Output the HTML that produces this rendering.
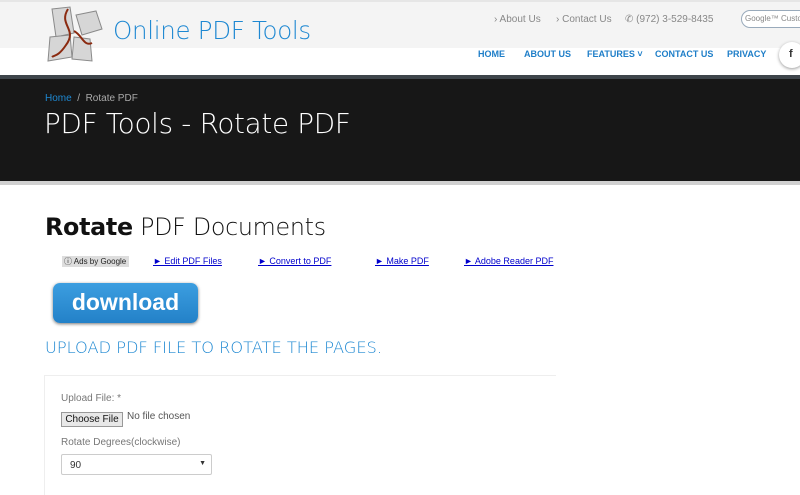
<!DOCTYPE html>
<html><head><meta charset="utf-8"><style>
*{margin:0;padding:0;box-sizing:border-box}
body{width:800px;height:487px;overflow:hidden;background:#fff;font-family:"Liberation Sans",sans-serif;position:relative}
.a{position:absolute;white-space:nowrap}
</style></head><body>
<div class="a" style="left:0;top:0;width:800px;height:2px;background:#e6e6e6"></div>
<div class="a" style="left:0;top:2px;width:800px;height:46px;background:#f4f4f4"></div>
<svg class="a" style="left:44px;top:5px" width="62" height="58" viewBox="0 0 62 58">
<g fill="#d6d6d6" stroke="#8a8a8a" stroke-width="1">
<path d="M8 4 L26 2 L30 28 L12 32 Z"/>
<path d="M32 10 L52 6 L58 24 L38 30 Z"/>
<path d="M6 32 L26 30 L28 52 L4 56 Z"/>
<path d="M30 32 L46 34 L48 56 L28 54 Z"/>
</g>
<path d="M24 4 C14 20,34 24,22 40 C14 52,10 50,8 52 M30 26 C38 30,40 42,48 38" stroke="#8b2a10" stroke-width="2" fill="none"/>
</svg>
<div class="a" style="left:113px;top:16px;font-size:24.5px;color:#1e88d2;font-family:'DejaVu Sans',sans-serif;font-weight:200;letter-spacing:-0.3px">Online PDF Tools</div>
<div class="a" style="left:494px;top:14px;font-size:10px;color:#888">› About Us</div>
<div class="a" style="left:556px;top:14px;font-size:10px;color:#888">› Contact Us</div>
<div class="a" style="left:625px;top:14px;font-size:10px;color:#888">✆ (972) 3-529-8435</div>
<div class="a" style="left:741px;top:10px;width:70px;height:18px;border:1px solid #9ab;border-radius:9px;background:#fff;font-size:8px;color:#888;padding:3px 0 0 3px">Google™ Custom</div>
<div class="a" style="left:478px;top:49px;font-size:9px;font-weight:bold;color:#1e7ec8">HOME</div>
<div class="a" style="left:524px;top:49px;font-size:9px;font-weight:bold;color:#1e7ec8">ABOUT US</div>
<div class="a" style="left:587px;top:49px;font-size:9px;font-weight:bold;color:#1e7ec8">FEATURES ˅</div>
<div class="a" style="left:655px;top:49px;font-size:9px;font-weight:bold;color:#1e7ec8">CONTACT US</div>
<div class="a" style="left:727px;top:49px;font-size:9px;font-weight:bold;color:#1e7ec8">PRIVACY</div>
<div class="a" style="left:779px;top:42px;width:26px;height:26px;border-radius:50%;background:#fff;box-shadow:0 1px 3px #999;font-size:11px;font-weight:bold;color:#333;padding:6px 0 0 10px">f</div>
<div class="a" style="left:0;top:75px;width:800px;height:4px;background:#3e454b"></div>
<div class="a" style="left:0;top:79px;width:800px;height:102px;background:#171717"></div>
<div class="a" style="left:0;top:181px;width:800px;height:4px;background:#d0d0d0"></div>
<div class="a" style="left:45px;top:93px;font-size:10px;color:#1e88d2">Home <span style="color:#aaa">&nbsp;/&nbsp; Rotate PDF</span></div>
<div class="a" style="left:44px;top:107px;font-size:27.8px;color:#fff;font-family:'DejaVu Sans',sans-serif;font-weight:200;letter-spacing:-0.3px">PDF Tools - Rotate PDF</div>
<div class="a" style="left:45px;top:213px;font-size:23.8px;color:#111;font-family:'DejaVu Sans',sans-serif;letter-spacing:-0.3px"><b>Rotate</b> <span style="font-weight:200">PDF Documents</span></div>
<div class="a" style="left:62px;top:256px;width:67px;height:11px;background:#ddd;font-size:8px;color:#222;padding-left:2px">ⓘ Ads by Google</div>
<div class="a" style="left:153px;top:256px;font-size:9px;color:#00c;text-decoration:underline">► Edit PDF Files</div>
<div class="a" style="left:258px;top:256px;font-size:9px;color:#00c;text-decoration:underline">► Convert to PDF</div>
<div class="a" style="left:375px;top:256px;font-size:9px;color:#00c;text-decoration:underline">► Make PDF</div>
<div class="a" style="left:464px;top:256px;font-size:9px;color:#00c;text-decoration:underline">► Adobe Reader PDF</div>
<div class="a" style="left:53px;top:283px;width:145px;height:40px;border-radius:7px;background:linear-gradient(#3c9ee0,#2381c8);box-shadow:0 1px 3px #777;color:#fff;font-weight:bold;font-size:23px;text-align:center;line-height:38px">download</div>
<div class="a" style="left:45px;top:338px;font-size:16.2px;color:#1e88d2;font-family:'DejaVu Sans',sans-serif;font-weight:200">UPLOAD PDF FILE TO ROTATE THE PAGES.</div>
<div class="a" style="left:44px;top:375px;width:512px;height:120px;border-top:1px solid #eee;border-left:1px solid #eee"></div>
<div class="a" style="left:61px;top:393px;font-size:10px;color:#777">Upload File: *</div>
<div class="a" style="left:61px;top:412px;width:62px;height:15px;border:1px solid #999;background:#e8e8e8;font-size:10px;color:#111;text-align:center;line-height:13px">Choose File</div>
<div class="a" style="left:127px;top:411px;font-size:10px;color:#555">No file chosen</div>
<div class="a" style="left:61px;top:437px;font-size:10px;color:#777">Rotate Degrees(clockwise)</div>
<div class="a" style="left:61px;top:454px;width:151px;height:21px;border:1px solid #ccc;border-radius:2px;font-size:10px;color:#333;padding:5px 0 0 8px">90<span style="position:absolute;right:5px;top:5px;font-size:7px">▼</span></div>
</body></html>
